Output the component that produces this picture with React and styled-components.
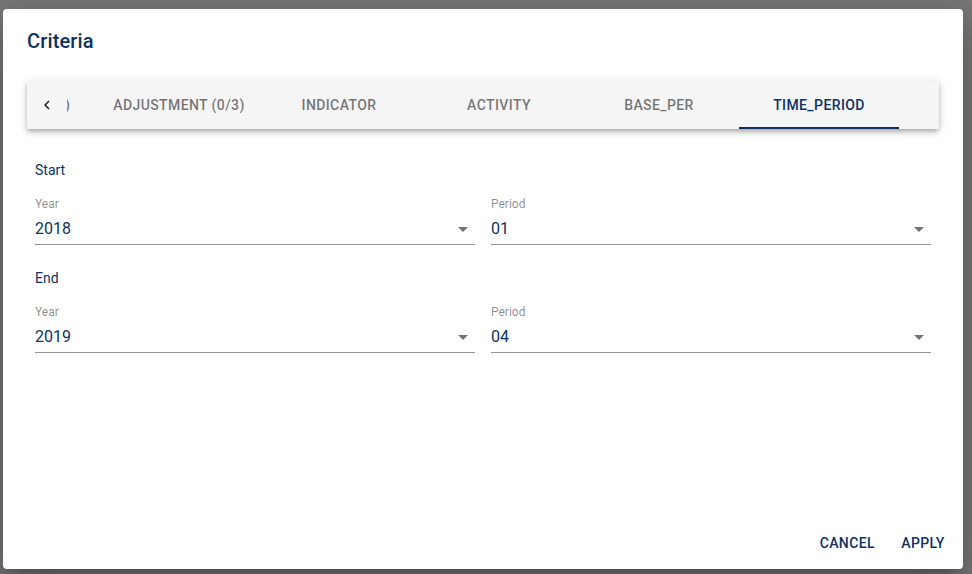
import React, { useLayoutEffect, useRef, useState } from 'react'
import styled, { createGlobalStyle } from 'styled-components';

const PRIMARY = '#0c3262';

const GlobalStyle = createGlobalStyle`
  html, body {
    margin: 0;
    padding: 0;
    background: #777777;
    font-family: Roboto, 'Liberation Sans', sans-serif;
  }
`;

const Backdrop = styled.div`
  width: 972px;
  height: 574px;
  padding: 9px 0 0 3px;
  box-sizing: border-box;
  overflow: hidden;
`;

const Dialog = styled.div`
  display: flex;
  flex-direction: column;
  width: 960px;
  height: 560px;
  background: #fff;
  border-radius: 4px;
  box-shadow: 0px 11px 15px -7px rgba(0,0,0,0.2), 0px 24px 38px 3px rgba(0,0,0,0.14), 0px 9px 46px 8px rgba(0,0,0,0.12);
`;

const DialogTitle = styled.h2`
  margin: 0;
  padding: 16px 24px;
  font-size: 20px;
  font-weight: 500;
  line-height: 32px;
  letter-spacing: 0.15px;
  color: ${PRIMARY};
`;

const DialogContent = styled.div`
  flex: 1;
  padding: 8px 24px 0;
`;

const TabBar = styled.div`
  display: flex;
  height: 48px;
  background: #f5f5f5;
  box-shadow: 0px 2px 4px -1px rgba(0,0,0,0.2), 0px 4px 5px 0px rgba(0,0,0,0.14), 0px 1px 10px 0px rgba(0,0,0,0.12);
`;

const ScrollButton = styled.button`
  flex: 0 0 40px;
  display: flex;
  align-items: center;
  justify-content: center;
  border: none;
  background: none;
  padding: 0;
  color: rgba(0,0,0,0.87);
  opacity: ${props => props.$hidden ? 0 : 1};
  cursor: pointer;
`;

const TabScroller = styled.div`
  flex: 1;
  display: flex;
  overflow: hidden;
  white-space: nowrap;
`;

const Tab = styled.div`
  position: relative;
  flex: 0 0 160px;
  display: flex;
  align-items: center;
  justify-content: center;
  font-size: 14px;
  font-weight: 500;
  letter-spacing: 0.4px;
  text-transform: uppercase;
  color: ${props => props.$active ? PRIMARY : 'rgba(0,0,0,0.54)'};
  cursor: pointer;

  &:after {
    content: '';
    position: absolute;
    left: 0;
    right: 0;
    bottom: 0;
    height: 2px;
    background: ${props => props.$active ? PRIMARY : 'transparent'};
  }
`;

const Form = styled.div`
  display: flex;
  flex-direction: column;
  padding: 31px 8px 0;
`;

const SectionLabel = styled.div`
  font-size: 14px;
  line-height: 20px;
  color: ${PRIMARY};
  margin-bottom: 16px;
`;

const FieldRow = styled.div`
  display: grid;
  grid-template-columns: 1fr 1fr;
  gap: 16px;
  margin-bottom: 23px;
`;

const Field = styled.div`
  display: flex;
  flex-direction: column;
`;

const FieldLabel = styled.div`
  font-size: 12px;
  line-height: 16px;
  color: rgba(0,0,0,0.46);
`;

const Select = styled.div`
  display: flex;
  align-items: center;
  justify-content: space-between;
  height: 32px;
  border-bottom: 1px solid rgba(0,0,0,0.42);
  font-size: 16px;
  color: ${PRIMARY};
  cursor: pointer;

  svg {
    fill: rgba(0,0,0,0.54);
    margin-top: 2px;
  }
`;

const DialogActions = styled.div`
  display: flex;
  justify-content: flex-end;
  gap: 8px;
  padding: 8px;
`;

const TextButton = styled.button`
  min-width: 64px;
  height: 36px;
  padding: 6px 8px;
  border: none;
  background: none;
  border-radius: 4px;
  font-family: inherit;
  font-size: 14px;
  font-weight: 500;
  letter-spacing: 0.4px;
  text-transform: uppercase;
  color: ${PRIMARY};
  cursor: pointer;
`;

const ArrowDrop = () => (
  <svg width="24" height="24" viewBox="0 0 24 24"><path d="M7 10l5 5 5-5z" /></svg>
);

const ArrowLeft = () => (
  <svg width="18" height="18" viewBox="0 0 24 24" fill="currentColor">
    <path d="M15.41 16.59L10.83 12l4.58-4.59L14 6l-6 6 6 6 1.41-1.41z" />
  </svg>
);

const tabs = ['Product (0/2)', 'Adjustment (0/3)', 'Indicator', 'Activity', 'Base_per', 'Time_period'];

function SelectField({ label, value }) {
  return (
    <Field>
      <FieldLabel>{label}</FieldLabel>
      <Select>
        <span>{value}</span>
        <ArrowDrop />
      </Select>
    </Field>
  );
}

function App() {
  const [active, setActive] = useState(5);
  const scrollerRef = useRef(null);

  // the tab strip is scrolled so only the tail of the first tab shows
  useLayoutEffect(() => {
    if (scrollerRef.current) scrollerRef.current.scrollLeft = 128;
  }, []);

  return (
    <>
      <GlobalStyle />
      <Backdrop>
        <Dialog>
          <DialogTitle>Criteria</DialogTitle>
          <DialogContent>
            <TabBar>
              <ScrollButton><ArrowLeft /></ScrollButton>
              <TabScroller ref={scrollerRef}>
                {tabs.map((t, i) => (
                  <Tab key={t} $active={i === active} onClick={() => setActive(i)}>{t}</Tab>
                ))}
              </TabScroller>
              <ScrollButton $hidden />
            </TabBar>
            <Form>
              <SectionLabel>Start</SectionLabel>
              <FieldRow>
                <SelectField label="Year" value="2018" />
                <SelectField label="Period" value="01" />
              </FieldRow>
              <SectionLabel>End</SectionLabel>
              <FieldRow>
                <SelectField label="Year" value="2019" />
                <SelectField label="Period" value="04" />
              </FieldRow>
            </Form>
          </DialogContent>
          <DialogActions>
            <TextButton>Cancel</TextButton>
            <TextButton>Apply</TextButton>
          </DialogActions>
        </Dialog>
      </Backdrop>
    </>
  )
}

export default App
